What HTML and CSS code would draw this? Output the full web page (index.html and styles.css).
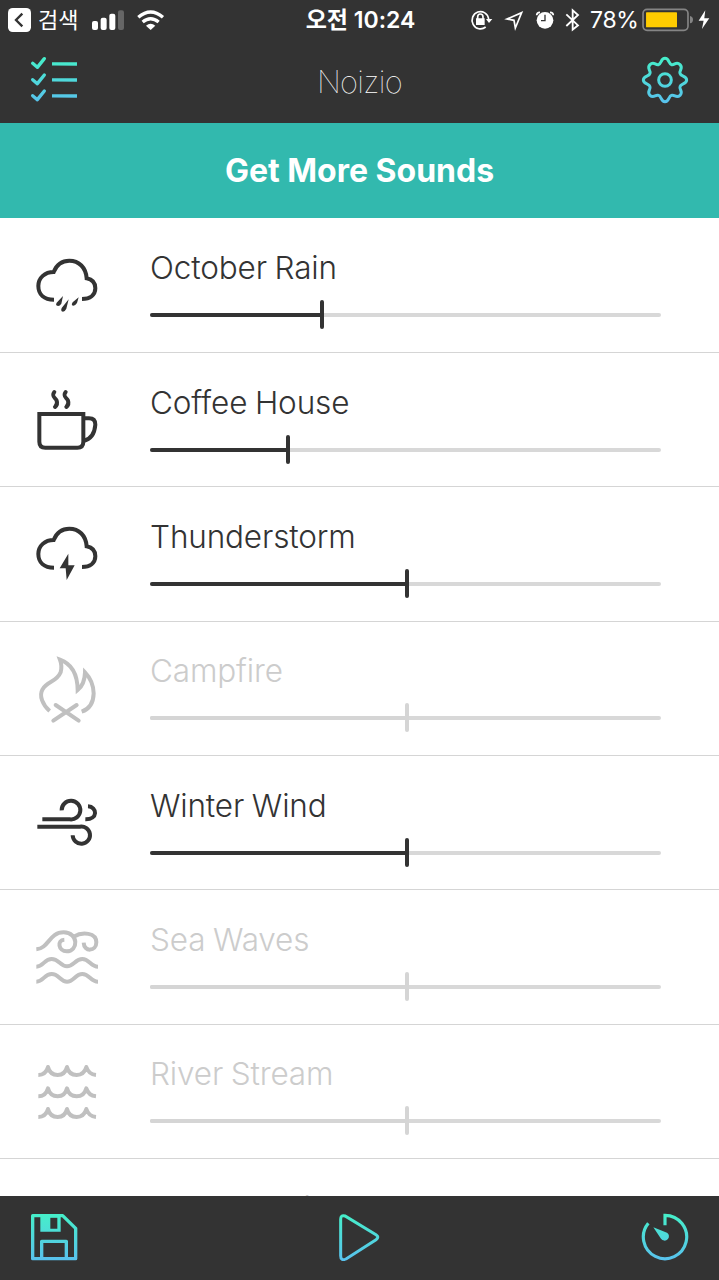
FILE: index.html
```html
<!DOCTYPE html>
<html lang="ko">
<head>
<meta charset="utf-8">
<title>Noizio</title>
<link rel="stylesheet" href="styles.css">
</head>
<body>
<svg class="defs" aria-hidden="true">
  <defs>
    <linearGradient id="mint" gradientUnits="userSpaceOnUse" x1="0" y1="0" x2="0" y2="144">
      <stop offset="0" stop-color="#45f0c8"/><stop offset="1" stop-color="#59c1ee"/>
    </linearGradient>
    <path id="cloud" d="M162 236C132 236 115 220 115 195C115 170 135 153 161 153C170 130 188 119 208 119C237 119 258 140 260 172C276 175 286 186 286 202C286 222 270 234 246 234"/>
    <path id="ripple" d="M115 102Q137 102 144 78Q150 102 173 102Q195 102 201 78Q207 102 230 102Q252 102 259 78Q266 100 288 102"/>
  </defs>
</svg>
<div class="app">
  <header class="header">
    <div class="status">
      <div class="status-left">
        <svg class="back" viewBox="0 0 69 72"><rect width="69" height="72" rx="14" fill="#fff"/><path d="M43 17L24 36L43 55" fill="none" stroke="#333" stroke-width="7"/></svg>
        <span class="back-label">검색</span>
        <svg class="signal" viewBox="276 24 220 66">
          <g fill="#fff"><rect x="276" y="60" width="18" height="27" rx="6"/><rect x="302" y="50" width="18" height="37" rx="6"/><rect x="328" y="38" width="18" height="49" rx="6"/><rect x="354" y="28" width="18" height="59" rx="6" fill="#666"/></g>
          <g fill="none" stroke="#fff" stroke-width="10"><path d="M415 49Q452 17 489 49"/><path d="M428 63Q452 43 476 63"/></g><path d="M438 74Q452 63 466 74L452 87Z" fill="#fff"/>
        </svg>
      </div>
      <span class="time">오전 10:24</span>
      <div class="status-right">
        <svg class="indicators" viewBox="30 22 330 72">
          <g fill="none" stroke="#fff" stroke-width="5"><path d="M77 79A25 26 0 1 1 86 55"/><path d="M53 57V49A8 9 0 0 1 69 49V57"/></g>
          <path d="M78 55H97L87 67ZM48 53H74V73H48Z" fill="#fff"/>
          <path d="M141 55L185 36L166 82L162 59Z" fill="none" stroke="#fff" stroke-width="5"/>
          <circle cx="255" cy="59" r="25" fill="#fff"/><path d="M255 42V60H243" fill="none" stroke="#333" stroke-width="4"/>
          <path d="M230 44Q230 35 240 35M270 35Q280 35 280 44" fill="none" stroke="#fff" stroke-width="5"/>
          <path d="M319 41L354 74L338 87V29L354 43L319 76" fill="none" stroke="#fff" stroke-width="5.500"/>
        </svg>
        <span class="percent">78%</span>
        <svg class="battery" viewBox="546 24 204 70">
          <rect x="549" y="28" width="135" height="63" rx="12" fill="none" stroke="#858585" stroke-width="5"/><rect x="558" y="37" width="93" height="45" rx="2" fill="#fc0"/>
          <path d="M690 48Q699 50 699 59T690 70Z" fill="#858585"/><path d="M736 31L716 62H731L726 87L748 55H733Z" fill="#fff"/>
        </svg>
      </div>
    </div>
    <nav class="nav">
      <svg class="tool" viewBox="0 0 144 144"><g fill="none" stroke="url(#mint)" stroke-width="10"><g stroke-linecap="round" stroke-linejoin="round"><path d="M8 22L22 34L43 8"/><path d="M8 71L22 83L43 57"/><path d="M8 119L22 131L43 105"/></g><path d="M66 23.500L141 24M66 71.500L141 72M66 119.500L141 120"/></g></svg>
      <h1 class="title">Noizio</h1>
      <svg class="tool" viewBox="0 0 144 144"><g fill="none" stroke="url(#mint)" stroke-width="9"><circle cx="72" cy="72" r="19"/><path d="M72 7C85 7 82 24 92 26C101 28 106 15 117 26C128 37 114 43 117 52C119 62 137 59 137 72S119 82 117 92C114 101 128 107 117 118C106 128 101 115 92 118C82 120 85 137 72 137S62 120 52 118C43 115 38 128 27 118C16 107 30 101 27 92C25 82 7 85 7 72S25 62 27 52C30 43 16 37 27 26C38 15 43 28 52 26C62 24 59 7 72 7Z"/></g></svg>
    </nav>
  </header>
  <div class="promo">Get More Sounds</div>
  <main class="sounds">
    <section class="sound">
      <svg class="icon" viewBox="0 -6 450 403"><use href="#cloud"/><path class="solid" d="M189 225L184 248Q177 259 169 253Q167 250 170 245ZM206 235L199 263Q193 275 185 271Q182 268 185 261ZM236 229L231 246Q224 257 216 253Q214 250 218 244Z"/></svg>
      <div class="info"><h2 class="name">October Rain</h2><div class="slider"><div class="fill" style="width:33.66%"></div></div></div>
    </section>
    <section class="sound">
      <svg class="icon" viewBox="0 -8 450 403"><path d="M118 175H250V258Q250 276 232 276H136Q118 276 118 258Z"/><path d="M250 188H267Q286 188 286 207Q283 249 250 256"/><path class="round" d="M163 109C153 122 166 126 170 135Q174 146 165 154M197 109C187 122 200 126 204 135Q208 146 199 154"/></svg>
      <div class="info"><h2 class="name">Coffee House</h2><div class="slider"><div class="fill" style="width:27%"></div></div></div>
    </section>
    <section class="sound">
      <svg class="icon" viewBox="0 -6 450 403"><use href="#cloud"/><path class="solid" d="M205 194L179 238H197L200 273L224 229H205Z"/></svg>
      <div class="info"><h2 class="name">Thunderstorm</h2><div class="slider"><div class="fill" style="width:50.2%"></div></div></div>
    </section>
    <section class="sound off">
      <svg class="icon" viewBox="0 -27 450 403"><path d="M149 240C128 222 117 194 127 176C142 149 169 155 182 124Q187 104 180 86Q232 105 233 177Q254 160 255 124Q280 150 281 187Q280 230 245 242"/><path class="round" d="M167 222L236 269M230 222L160 269"/></svg>
      <div class="info"><h2 class="name">Campfire</h2><div class="slider"><div class="fill" style="width:50.2%"></div></div></div>
    </section>
    <section class="sound">
      <svg class="icon" viewBox="0 -44 450 403"><path d="M127 146H209A28 28 0 1 0 185 119M112 168H239A26 26 0 1 1 218 194M264 107C292 108 295 147 256 146"/></svg>
      <div class="info"><h2 class="name">Winter Wind</h2><div class="slider"><div class="fill" style="width:50.2%"></div></div></div>
    </section>
    <section class="sound off">
      <svg class="icon" viewBox="0 -31 450 403"><path d="M109 147C147 144 147 96 191 96C237 97 235 153 200 153C175 153 170 119 193 118M221 109C248 93 289 97 289 126C289 154 252 156 251 127M109 199C130 199 133 176 155 176S181 198 201 198S226 176 247 176S272 199 294 199M109 244C130 244 133 221 155 221S181 244 201 244S226 221 247 221S272 244 294 244"/></svg>
      <div class="info"><h2 class="name">Sea Waves</h2><div class="slider"><div class="fill" style="width:50.2%"></div></div></div>
    </section>
    <section class="sound off">
      <svg class="icon joined" viewBox="0 -48 450 403"><use href="#ripple"/><use href="#ripple" y="64"/><use href="#ripple" y="126"/></svg>
      <div class="info"><h2 class="name">River Stream</h2><div class="slider"><div class="fill" style="width:50.2%"></div></div></div>
    </section>
    <section class="sound off">
      <svg class="icon" viewBox="0 0 450 403"></svg>
      <div class="info"><h2 class="name">Summer Night</h2><div class="slider"><div class="fill" style="width:50.2%"></div></div></div>
    </section>
  </main>
  <footer class="toolbar">
    <svg class="tool" viewBox="0 0 144 144"><path d="M8 8H98L137 46V137H8ZM35 137V85H109V137" fill="none" stroke="url(#mint)" stroke-width="10" stroke-linejoin="round"/><path d="M31 8H92V56H31ZM61 14V47H82V14Z" fill="url(#mint)" fill-rule="evenodd"/></svg>
    <svg class="tool" viewBox="4 0 144 144"><path d="M18 19Q18 5 31 9L124 65Q135 72 124 80L34 138Q18 145 18 128Z" fill="none" stroke="url(#mint)" stroke-width="9"/></svg>
    <svg class="tool" viewBox="0 0 144 144"><path d="M72 37V7A65 65 0 1 1 22 30.500" fill="none" stroke="url(#mint)" stroke-width="9.500"/><path d="M37 43L78 59A13 13 0 1 1 60 77Z" fill="url(#mint)"/></svg>
  </footer>
</div>
</body>
</html>
```
FILE: styles.css
```css
* { box-sizing: border-box; }
body { margin: 0; font-family: Inter, "Noto Sans CJK KR", sans-serif; background: #fff; color: #333; }
svg { display: block; flex: none; }
h1, h2 { margin: 0; }
.defs { position: absolute; width: 0; height: 0; }
.app { display: flex; flex-direction: column; width: 719px; height: 1280px; overflow: hidden; }
.header { flex: none; height: 123px; background: #333; color: #fff; }
.status { display: grid; grid-template-columns: 1fr auto 1fr; align-items: center; height: 40px; padding: 0 9px 0 8px; font-size: 23px; }
.status-left, .status-right { display: flex; align-items: center; }
.status-right { justify-content: flex-end; }
.back { width: 23px; height: 24px; }
.back-label { margin-left: 7px; width: 40px; font-size: 22px; line-height: 40px; white-space: nowrap; }
.signal { width: 73.3px; height: 22px; margin-left: 14px; }
.time { margin-left: 3px; font-weight: 600; line-height: 40px; white-space: nowrap; }
.indicators { width: 110px; height: 24px; margin-right: 10px; }
.percent { width: 47px; line-height: 40px; letter-spacing: -.3px; white-space: nowrap; }
.battery { width: 68px; height: 23.3px; margin-left: 5px; }
.nav { display: flex; justify-content: space-between; padding: 16px 30px 0 30px; }
.tool { width: 48px; height: 48px; }
.title { font-size: 31px; line-height: 51px; font-weight: 100; letter-spacing: -.7px; }
.promo { flex: none; height: 95px; background: #32b9ae; color: #fff; font-size: 32px; line-height: 95px; font-weight: 700; text-align: center; }
.sounds { flex: 1; min-height: 0; overflow: hidden; padding-top: .7px; }
.sound { display: flex; height: 134.33px; border-bottom: 1px solid #d5d5d5; }
.icon { width: 150px; height: 134.33px; fill: none; stroke: #333; stroke-width: 12; }
.icon .solid { fill: #333; stroke: none; }
.icon .round { stroke-linecap: round; }
.joined { stroke-linejoin: round; }
.info { width: 511px; padding-top: 28.5px; }
.name { font-size: 31.5px; line-height: 42px; font-weight: 300; letter-spacing: -.15px; word-spacing: -1px; white-space: nowrap; }
.slider { height: 4px; margin-top: 24.3px; border-radius: 2px; background: #d8d8d8; }
.fill { position: relative; height: 4px; border-radius: 2px; background: #333; }
.fill::after { content: ""; position: absolute; right: -2px; top: -13px; width: 4px; height: 29px; border-radius: 2px; background: inherit; }
.off .name { color: #ccc; }
.off .icon { stroke: #c0c0c0; }
.off .fill { background: #d5d5d5; }
.toolbar { flex: none; display: flex; justify-content: space-between; height: 84px; padding: 17px 30px 0 30px; background: #333; }
```
